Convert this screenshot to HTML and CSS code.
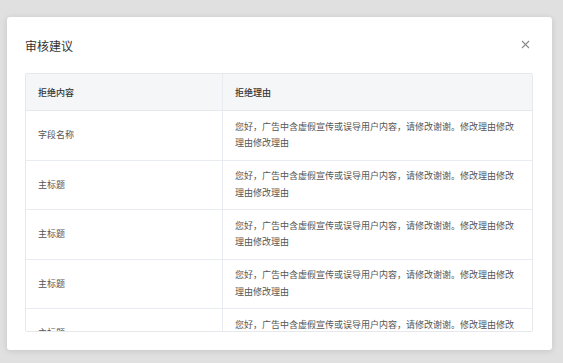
FILE: index.html
```html
<!DOCTYPE html>
<html lang="zh-CN">
<head>
  <meta charset="UTF-8">
  <meta name="viewport" content="width=device-width, initial-scale=1.0">
  <title>审核建议</title>
  <link rel="stylesheet" href="styles.css">
</head>
<body>
  <div class="modal">
    <div class="modal-head">
      <p class="title">审核建议</p>
      <button class="close" aria-label="关闭">
        <svg width="9" height="9" viewBox="0 0 9 9"><path d="M1 1L8 8M8 1L1 8" stroke="#8a8a8a" stroke-width="1.1" fill="none"/></svg>
      </button>
    </div>

    <div class="tabulka">
      <table>
        <thead>
          <tr>
            <th class="sl1">拒绝内容</th>
            <th>拒绝理由</th>
          </tr>
        </thead>
        <tbody>
          <tr>
            <td class="sl1">字段名称</td>
            <td>您好，广告中含虚假宣传或误导用户内容，请修改谢谢。修改理由修改理由修改理由</td>
          </tr>
          <tr>
            <td class="sl1">主标题</td>
            <td>您好，广告中含虚假宣传或误导用户内容，请修改谢谢。修改理由修改理由修改理由</td>
          </tr>
          <tr>
            <td class="sl1">主标题</td>
            <td>您好，广告中含虚假宣传或误导用户内容，请修改谢谢。修改理由修改理由修改理由</td>
          </tr>
          <tr>
            <td class="sl1">主标题</td>
            <td>您好，广告中含虚假宣传或误导用户内容，请修改谢谢。修改理由修改理由修改理由</td>
          </tr>
          <tr>
            <td class="sl1">主标题</td>
            <td>您好，广告中含虚假宣传或误导用户内容，请修改谢谢。修改理由修改理由修改理由</td>
          </tr>
        </tbody>
      </table>
    </div>
  </div>
</body>
</html>
```

FILE: styles.css
```css
html, body {
  margin: 0;
  padding: 0;
  height: 100%;
}
body {
  background-color: #e0e0e0;
  font-family: "Noto Sans CJK SC", "Noto Sans", sans-serif;
  padding: 17px 11px 0 7px;
  box-sizing: border-box;
}
.modal {
  background-color: white;
  border-radius: 3px;
  box-shadow: 0 1px 6px rgba(0, 0, 0, 0.12);
  height: 333px;
  box-sizing: border-box;
  padding: 0 19px 18px 18px;
  display: flex;
  flex-direction: column;
}
.modal-head {
  display: flex;
  align-items: center;
  justify-content: space-between;
  height: 56px;
}
.title {
  margin: 0;
  font-size: 12px;
  color: #333;
  line-height: 16px;
  padding-top: 2px;
}
.close {
  border: none;
  background: none;
  padding: 0;
  margin-right: 3px;
  margin-top: -2px;
  cursor: pointer;
  display: flex;
}
.tabulka {
  flex: 1;
  border: 1px solid #e6e8eb;
  border-radius: 2px;
  overflow: hidden;
}
table {
  width: 100%;
  border-collapse: collapse;
  table-layout: fixed;
  font-size: 9px;
}
th {
  background-color: #f5f6f8;
  color: #333;
  font-weight: 500;
  text-align: left;
  height: 36px;
  padding: 0 12px;
  border-bottom: 1px solid #e6e8eb;
}
td {
  color: #555;
  padding: 7.75px 12px;
  line-height: 16.5px;
  border-bottom: 1px solid #e8ebef;
  vertical-align: middle;
}
.sl1 {
  width: 172px;
  border-right: 1px solid #e8ebef;
}
```
